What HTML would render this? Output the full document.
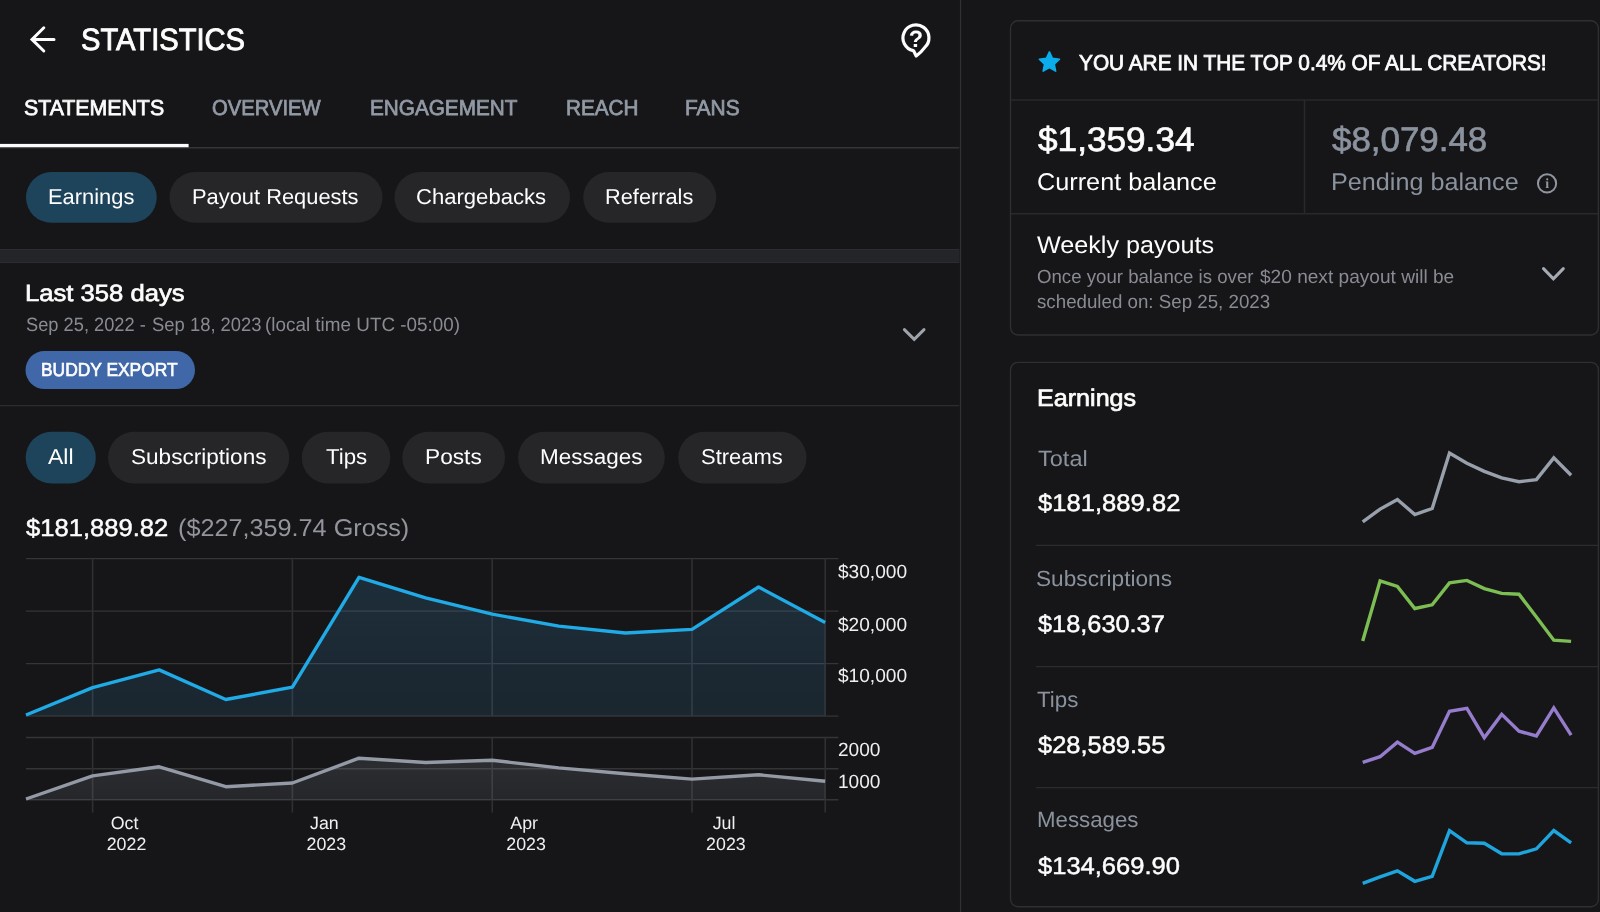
<!DOCTYPE html>
<html lang="en"><head><meta charset="utf-8"><title>Statistics</title>
<style>
html,body{margin:0;padding:0;background:#161618;}
body{width:1600px;height:912px;position:relative;overflow:hidden;font-family:"Liberation Sans", sans-serif;}
.t{position:absolute;white-space:nowrap;line-height:1;transform-origin:0 0;display:block;text-rendering:geometricPrecision;}
.g{display:block;margin:0;padding:0;}
#page{position:absolute;left:0;top:0;width:1600px;height:912px;will-change:transform;}
#txt{position:absolute;left:0;top:0;width:1600px;height:912px;}
svg{position:absolute;left:0;top:0;}
svg text{font-family:"Liberation Sans", sans-serif;text-rendering:geometricPrecision;}
</style></head><body>
<div id="page">
<svg width="1600" height="912" viewBox="0 0 1600 912">
<rect x="26" y="172.1" width="130.7" height="50.7" rx="25.35" fill="#1d445b"/>
<rect x="169.5" y="172.1" width="213" height="50.7" rx="25.35" fill="#262629"/>
<rect x="394.5" y="172.1" width="175.5" height="50.7" rx="25.35" fill="#262629"/>
<rect x="583.25" y="172.1" width="133" height="50.7" rx="25.35" fill="#262629"/>
<rect x="25.7" y="431.8" width="70.1" height="51.7" rx="25.85" fill="#1d445b"/>
<rect x="108.1" y="431.8" width="181.1" height="51.7" rx="25.85" fill="#262629"/>
<rect x="301.8" y="431.8" width="88.5" height="51.7" rx="25.85" fill="#262629"/>
<rect x="402.3" y="431.8" width="102.7" height="51.7" rx="25.85" fill="#262629"/>
<rect x="518.1" y="431.8" width="146.7" height="51.7" rx="25.85" fill="#262629"/>
<rect x="678.2" y="431.8" width="128.3" height="51.7" rx="25.85" fill="#262629"/>
<rect x="25.5" y="351" width="169.5" height="38.1" rx="19.05" fill="#4067a8"/>
<rect x="0" y="249" width="959.3" height="14.1" fill="#2c2d30"/>
<rect x="0" y="250.2" width="959.3" height="11.7" fill="#242528"/>
<line x1="0" y1="147.7" x2="959.3" y2="147.7" stroke="#343538" stroke-width="1.4" />
<rect x="0" y="143.9" width="188.6" height="3.3" fill="#fdfdfd"/>
<line x1="0" y1="405.6" x2="959.3" y2="405.6" stroke="#2c2d30" stroke-width="1.4" />
<line x1="960.55" y1="0" x2="960.55" y2="912" stroke="#303134" stroke-width="1.3" />
<rect x="1010.5" y="20.7" width="587.9" height="314.3" rx="7.5" ry="7.5" fill="none" stroke="#2e2f32" stroke-width="1.4"/>
<rect x="1010.5" y="362.4" width="587.9" height="544.3" rx="7.5" ry="7.5" fill="none" stroke="#2e2f32" stroke-width="1.4"/>
<line x1="1011" y1="99.9" x2="1598" y2="99.9" stroke="#29292c" stroke-width="1.5" />
<line x1="1011" y1="213.75" x2="1598" y2="213.75" stroke="#29292c" stroke-width="1.5" />
<line x1="1304.5" y1="100" x2="1304.5" y2="213.75" stroke="#29292c" stroke-width="1.5" />
<line x1="1036" y1="545.4" x2="1598" y2="545.4" stroke="#2b2c2f" stroke-width="1.4" />
<line x1="1036" y1="666.6" x2="1598" y2="666.6" stroke="#2b2c2f" stroke-width="1.4" />
<line x1="1036" y1="787.6" x2="1598" y2="787.6" stroke="#2b2c2f" stroke-width="1.4" />
<line x1="26" y1="558.6" x2="838.4" y2="558.6" stroke="#343537" stroke-width="1.4" />
<line x1="26" y1="611.1" x2="838.4" y2="611.1" stroke="#343537" stroke-width="1.4" />
<line x1="26" y1="663.6" x2="838.4" y2="663.6" stroke="#343537" stroke-width="1.4" />
<line x1="26" y1="716.1" x2="838.4" y2="716.1" stroke="#343537" stroke-width="1.4" />
<line x1="26" y1="737.5" x2="838.4" y2="737.5" stroke="#343537" stroke-width="1.4" />
<line x1="26" y1="768.7" x2="838.4" y2="768.7" stroke="#343537" stroke-width="1.4" />
<line x1="26" y1="799.8" x2="838.4" y2="799.8" stroke="#343537" stroke-width="1.4" />
<line x1="92.6" y1="558.6" x2="92.6" y2="716.1" stroke="#2f3032" stroke-width="1.6" />
<line x1="92.6" y1="737.5" x2="92.6" y2="812.6" stroke="#2f3032" stroke-width="1.6" />
<line x1="292.4" y1="558.6" x2="292.4" y2="716.1" stroke="#2f3032" stroke-width="1.6" />
<line x1="292.4" y1="737.5" x2="292.4" y2="812.6" stroke="#2f3032" stroke-width="1.6" />
<line x1="492.2" y1="558.6" x2="492.2" y2="716.1" stroke="#2f3032" stroke-width="1.6" />
<line x1="492.2" y1="737.5" x2="492.2" y2="812.6" stroke="#2f3032" stroke-width="1.6" />
<line x1="692" y1="558.6" x2="692" y2="716.1" stroke="#2f3032" stroke-width="1.6" />
<line x1="692" y1="737.5" x2="692" y2="812.6" stroke="#2f3032" stroke-width="1.6" />
<line x1="825.2" y1="558.6" x2="825.2" y2="716.1" stroke="#2f3032" stroke-width="1.6" />
<line x1="825.2" y1="737.5" x2="825.2" y2="812.6" stroke="#2f3032" stroke-width="1.6" />
<defs><linearGradient id="gb" gradientUnits="userSpaceOnUse" x1="0" y1="577" x2="0" y2="716"><stop offset="0" stop-color="#3e95cc" stop-opacity="0.19"/><stop offset="1" stop-color="#3e95cc" stop-opacity="0.13"/></linearGradient><linearGradient id="gg" gradientUnits="userSpaceOnUse" x1="0" y1="758" x2="0" y2="800"><stop offset="0" stop-color="#8a929e" stop-opacity="0.19"/><stop offset="1" stop-color="#8a929e" stop-opacity="0.14"/></linearGradient></defs>
<polygon points="26.0,715.0 92.6,687.6 159.2,669.9 225.8,699.5 292.4,687.2 359.0,577.3 425.6,597.9 492.2,614.2 558.8,626.1 625.4,633.0 692.0,629.4 758.6,587.0 825.2,622.5 825.2,716.1 26.0,716.1" fill="url(#gb)"/>
<polyline points="26.0,715.0 92.6,687.6 159.2,669.9 225.8,699.5 292.4,687.2 359.0,577.3 425.6,597.9 492.2,614.2 558.8,626.1 625.4,633.0 692.0,629.4 758.6,587.0 825.2,622.5" fill="none" stroke="#20aae6" stroke-width="3.4" stroke-linejoin="round"/>
<polygon points="26.0,799.0 92.6,775.9 159.2,766.8 225.8,786.7 292.4,783.0 359.0,758.2 425.6,762.5 492.2,760.3 558.8,767.9 625.4,773.7 692.0,779.1 758.6,774.8 825.2,781.3 825.2,799.8 26.0,799.8" fill="url(#gg)"/>
<polyline points="26.0,799.0 92.6,775.9 159.2,766.8 225.8,786.7 292.4,783.0 359.0,758.2 425.6,762.5 492.2,760.3 558.8,767.9 625.4,773.7 692.0,779.1 758.6,774.8 825.2,781.3" fill="none" stroke="#949aa5" stroke-width="3.4" stroke-linejoin="round"/>
<text x="838" y="578" font-size="19.1" fill="#efeff0" text-anchor="start">$30,000</text>
<text x="838" y="630.5" font-size="19.1" fill="#efeff0" text-anchor="start">$20,000</text>
<text x="838" y="682" font-size="19.1" fill="#efeff0" text-anchor="start">$10,000</text>
<text x="838" y="756.3" font-size="19.1" fill="#efeff0" text-anchor="start">2000</text>
<text x="838" y="787.8" font-size="19.1" fill="#efeff0" text-anchor="start">1000</text>
<text x="124.6" y="829.4" font-size="17.8" fill="#efeff0" text-anchor="middle">Oct</text>
<text x="126.5" y="850" font-size="17.8" fill="#efeff0" text-anchor="middle">2022</text>
<text x="324.4" y="829.4" font-size="17.8" fill="#efeff0" text-anchor="middle">Jan</text>
<text x="326.3" y="850" font-size="17.8" fill="#efeff0" text-anchor="middle">2023</text>
<text x="524.2" y="829.4" font-size="17.8" fill="#efeff0" text-anchor="middle">Apr</text>
<text x="526.1" y="850" font-size="17.8" fill="#efeff0" text-anchor="middle">2023</text>
<text x="724" y="829.4" font-size="17.8" fill="#efeff0" text-anchor="middle">Jul</text>
<text x="725.9" y="850" font-size="17.8" fill="#efeff0" text-anchor="middle">2023</text>
<polyline points="1362.7,521.8 1380.1,509.1 1397.4,499.5 1414.8,514.5 1432.2,508.5 1449.5,453.1 1466.9,463.3 1484.3,471.4 1501.7,477.9 1519.0,481.7 1536.4,479.6 1553.8,457.9 1571.1,475.2" fill="none" stroke="#98a0ac" stroke-width="3.4" stroke-linejoin="miter"/>
<polyline points="1362.7,641.0 1380.1,580.9 1397.4,586.4 1414.8,608.5 1432.2,604.8 1449.5,582.9 1466.9,580.4 1484.3,588.6 1501.7,593.4 1519.0,594.2 1536.4,617.0 1553.8,640.2 1571.1,641.4" fill="none" stroke="#7cbd54" stroke-width="3.4" stroke-linejoin="miter"/>
<polyline points="1362.7,762.4 1380.1,756.7 1397.4,742.1 1414.8,753.4 1432.2,747.4 1449.5,711.2 1466.9,708.4 1484.3,737.7 1501.7,714.4 1519.0,731.2 1536.4,736.0 1553.8,707.9 1571.1,735.1" fill="none" stroke="#967ccc" stroke-width="3.4" stroke-linejoin="miter"/>
<polyline points="1362.7,883.4 1380.1,876.9 1397.4,870.8 1414.8,881.3 1432.2,876.4 1449.5,830.6 1466.9,842.8 1484.3,843.3 1501.7,853.7 1519.0,853.9 1536.4,848.8 1553.8,830.6 1571.1,842.8" fill="none" stroke="#1ea5de" stroke-width="3.4" stroke-linejoin="miter"/>
<path d="M43.8 27.8 L32 39.4 L43.8 51 M32.6 39.4 L54 39.4" fill="none" stroke="#fdfdfd" stroke-width="3" stroke-linecap="round" stroke-linejoin="miter"/>
<path d="M913.2 50.6 A13 13 0 1 1 924.6 47.6 Q921 52.5 916.2 56 L913.6 50.8" fill="none" stroke="#fdfdfd" stroke-width="3.2" stroke-linejoin="round" stroke-linecap="round"/>
<text x="916" y="47" font-size="23.5" font-weight="bold" fill="#fdfdfd" text-anchor="middle">?</text>
<path d="M904.4 329.6 L914.2 339.3 L924 329.6" fill="none" stroke="#9ea2aa" stroke-width="3" stroke-linecap="round" stroke-linejoin="miter"/>
<path d="M1543.5 268.6 L1553.4 278.9 L1563.3 268.6" fill="none" stroke="#a5aab4" stroke-width="3" stroke-linecap="round" stroke-linejoin="miter"/>
<polygon points="1049.40,51.90 1052.40,58.37 1059.48,59.22 1054.25,64.08 1055.63,71.08 1049.40,67.60 1043.17,71.08 1044.55,64.08 1039.32,59.22 1046.40,58.37" fill="#0aacec" stroke="#0aacec" stroke-width="1.6" stroke-linejoin="round"/>
<circle cx="1547.05" cy="183.4" r="9.1" fill="none" stroke="#9096a0" stroke-width="2"/>
<text x="1547.1" y="188" font-size="14" style="font-family:Liberation Serif,serif" font-weight="bold" fill="#9096a0" text-anchor="middle">i</text>
</svg>
<div id="txt">
<header class="g" id="topbar">
<span class="t" style="left:81.15px;top:25px;font-size:30.8px;color:#fdfdfd;-webkit-text-stroke:0.90px #fdfdfd;transform:scaleX(0.9462)">STATISTICS</span>
</header>
<nav class="g" id="tabs">
<span class="t" style="left:24.00px;top:97px;font-size:21.6px;color:#fdfdfd;-webkit-text-stroke:0.78px #fdfdfd;transform:scaleX(0.9869)">STATEMENTS</span>
<span class="t" style="left:211.56px;top:97px;font-size:21.6px;color:#929aa6;-webkit-text-stroke:0.78px #929aa6;transform:scaleX(0.9363)">OVERVIEW</span>
<span class="t" style="left:369.54px;top:97px;font-size:21.6px;color:#929aa6;-webkit-text-stroke:0.78px #929aa6;transform:scaleX(0.9598)">ENGAGEMENT</span>
<span class="t" style="left:565.54px;top:97px;font-size:21.6px;color:#929aa6;-webkit-text-stroke:0.78px #929aa6;transform:scaleX(0.9590)">REACH</span>
<span class="t" style="left:685.28px;top:97px;font-size:21.6px;color:#929aa6;-webkit-text-stroke:0.78px #929aa6;transform:scaleX(0.9683)">FANS</span>
</nav>
<nav class="g" id="subtabs">
<span class="t" style="left:47.59px;top:186px;font-size:21.6px;color:#fdfdfd;transform:scaleX(1.0139)">Earnings</span>
<span class="t" style="left:191.99px;top:186px;font-size:21.6px;color:#fdfdfd;transform:scaleX(1.0128)">Payout Requests</span>
<span class="t" style="left:416.48px;top:186px;font-size:21.6px;color:#fdfdfd;transform:scaleX(1.0223)">Chargebacks</span>
<span class="t" style="left:604.74px;top:186px;font-size:21.6px;color:#fdfdfd;transform:scaleX(1.0081)">Referrals</span>
</nav>
<section class="g" id="period">
<span class="t" style="left:25.20px;top:282px;font-size:23.4px;color:#fdfdfd;-webkit-text-stroke:0.66px #fdfdfd;transform:scaleX(1.0955)">Last 358 days</span>
<span class="t" style="left:26.10px;top:316px;font-size:19.3px;color:#888b92;transform:scaleX(0.9471)">Sep 25, 2022 -</span>
<span class="t" style="left:151.50px;top:316px;font-size:19.3px;color:#888b92;transform:scaleX(0.9553)">Sep 18, 2023</span>
<span class="t" style="left:265.22px;top:316px;font-size:19.3px;color:#888b92;transform:scaleX(0.9789)">(local time UTC -05:00)</span>
<span class="t" style="left:40.87px;top:361px;font-size:18.8px;color:#fdfdfd;-webkit-text-stroke:0.68px #fdfdfd;transform:scaleX(0.9263)">BUDDY EXPORT</span>
</section>
<nav class="g" id="filters">
<span class="t" style="left:48.00px;top:446px;font-size:21.6px;color:#fdfdfd;transform:scaleX(1.0646)">All</span>
<span class="t" style="left:131.20px;top:446px;font-size:21.6px;color:#fdfdfd;transform:scaleX(1.0452)">Subscriptions</span>
<span class="t" style="left:325.50px;top:446px;font-size:21.6px;color:#fdfdfd;transform:scaleX(1.0300)">Tips</span>
<span class="t" style="left:424.95px;top:446px;font-size:21.6px;color:#fdfdfd;transform:scaleX(1.0506)">Posts</span>
<span class="t" style="left:539.86px;top:446px;font-size:21.6px;color:#fdfdfd;transform:scaleX(1.0408)">Messages</span>
<span class="t" style="left:701.00px;top:446px;font-size:21.6px;color:#fdfdfd;transform:scaleX(1.0161)">Streams</span>
</nav>
<section class="g" id="totals">
<span class="t" style="left:26.10px;top:517px;font-size:24.3px;color:#fdfdfd;-webkit-text-stroke:0.49px #fdfdfd;transform:scaleX(1.0527)">$181,889.82</span>
<span class="t" style="left:177.76px;top:517px;font-size:24.3px;color:#92959c;transform:scaleX(1.0378)">($227,359.74 Gross)</span>
</section>
<aside class="g" id="sidebar"><section class="g" id="banner">
<span class="t" style="left:1079.10px;top:52px;font-size:21.6px;color:#fdfdfd;-webkit-text-stroke:0.78px #fdfdfd;transform:scaleX(0.9637)">YOU ARE IN THE TOP 0.4% OF ALL CREATORS!</span>
</section>
<section class="g" id="balances">
<span class="t" style="left:1037.80px;top:123px;font-size:34px;color:#fdfdfd;-webkit-text-stroke:0.68px #fdfdfd;transform:scaleX(1.0349)">$1,359.34</span>
<span class="t" style="left:1036.76px;top:171px;font-size:24.2px;color:#fdfdfd;transform:scaleX(1.0443)">Current balance</span>
<span class="t" style="left:1332.25px;top:123px;font-size:34px;color:#8a929e;-webkit-text-stroke:0.68px #8a929e;transform:scaleX(1.0266)">$8,079.48</span>
<span class="t" style="left:1331.21px;top:171px;font-size:24.2px;color:#8a929e;transform:scaleX(1.0413)">Pending balance</span>
</section>
<section class="g" id="payouts">
<span class="t" style="left:1036.60px;top:234px;font-size:24px;color:#fdfdfd;transform:scaleX(1.0484)">Weekly payouts</span>
<span class="t" style="left:1036.60px;top:268px;font-size:19px;color:#888b92;transform:scaleX(0.9808)">Once your balance is over</span>
<span class="t" style="left:1260.40px;top:268px;font-size:19px;color:#888b92;transform:scaleX(1.0045)">$20 next payout will be</span>
<span class="t" style="left:1036.60px;top:293px;font-size:19px;color:#888b92;transform:scaleX(0.9853)">scheduled on: Sep 25, 2023</span>
</section>
<section class="g" id="earnings">
<span class="t" style="left:1037.25px;top:387px;font-size:24px;color:#fdfdfd;-webkit-text-stroke:0.67px #fdfdfd;transform:scaleX(1.0467)">Earnings</span>
<span class="t" style="left:1037.50px;top:448px;font-size:22px;color:#8a929e;transform:scaleX(1.0695)">Total</span>
<span class="t" style="left:1038.00px;top:492px;font-size:24px;color:#fdfdfd;-webkit-text-stroke:0.48px #fdfdfd;transform:scaleX(1.0667)">$181,889.82</span>
<span class="t" style="left:1036.27px;top:568px;font-size:22px;color:#8a929e;transform:scaleX(1.0296)">Subscriptions</span>
<span class="t" style="left:1038.00px;top:613px;font-size:24px;color:#fdfdfd;-webkit-text-stroke:0.48px #fdfdfd;transform:scaleX(1.0554)">$18,630.37</span>
<span class="t" style="left:1037.20px;top:689px;font-size:22px;color:#8a929e;transform:scaleX(1.0136)">Tips</span>
<span class="t" style="left:1038.00px;top:734px;font-size:24px;color:#fdfdfd;-webkit-text-stroke:0.48px #fdfdfd;transform:scaleX(1.0604)">$28,589.55</span>
<span class="t" style="left:1036.79px;top:809px;font-size:22px;color:#8a929e;transform:scaleX(1.0114)">Messages</span>
<span class="t" style="left:1038.00px;top:855px;font-size:24px;color:#fdfdfd;-webkit-text-stroke:0.48px #fdfdfd;transform:scaleX(1.0630)">$134,669.90</span>
</section>
</aside>
</div>
</div>
</body></html>
